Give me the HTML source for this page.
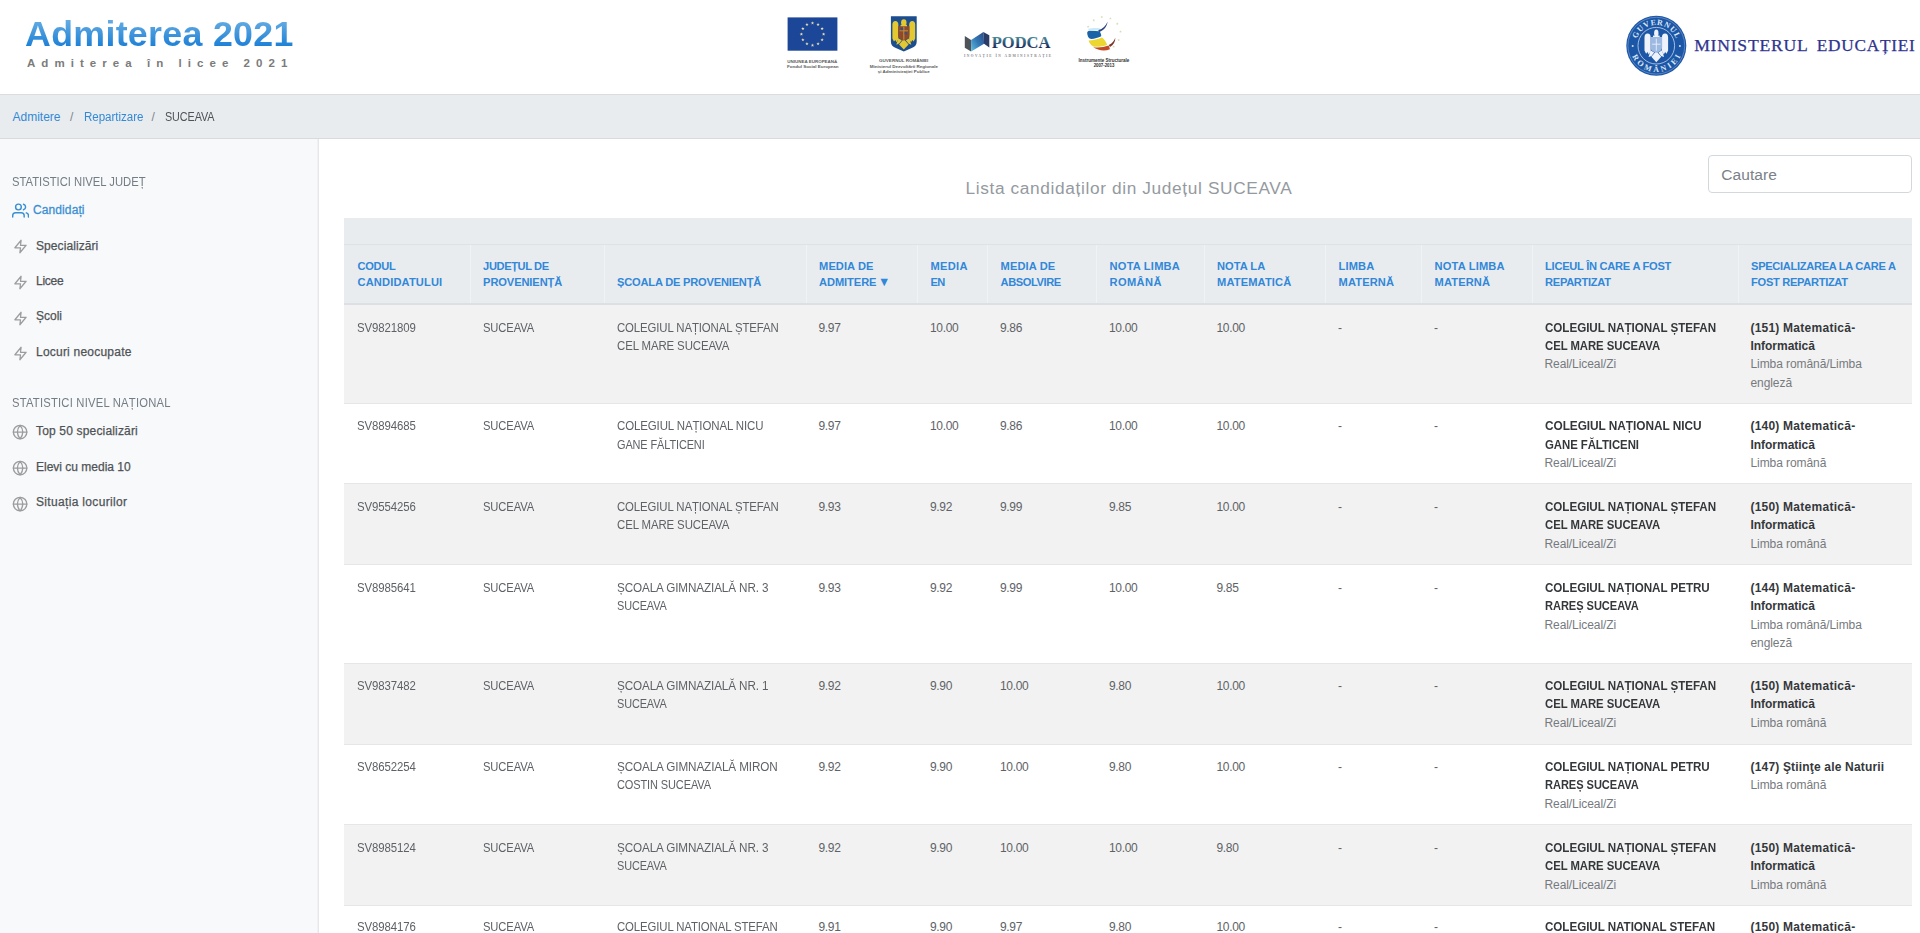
<!DOCTYPE html>
<html lang="ro">
<head>
<meta charset="utf-8">
<title>Admiterea 2021 - SUCEAVA</title>
<style>
*{box-sizing:border-box;margin:0;padding:0}
html,body{width:1920px;height:933px;overflow:hidden;background:#fff}
body{font-family:"Liberation Sans",sans-serif;font-size:12px;color:#5b5f63;position:relative}
a{text-decoration:none;color:#3289d6}
.abs{position:absolute;white-space:nowrap}

/* ---------- top header ---------- */
#top{position:absolute;left:0;top:0;width:1920px;height:94px;background:#fff}
#brand{left:24.5px;top:12px;font-weight:bold;font-size:34.6px;line-height:44px;letter-spacing:.3px;transform:scaleX(1.034);transform-origin:0 50%;
  background:linear-gradient(#63abe2 20%,#1b7fd6 80%);-webkit-background-clip:text;background-clip:text;color:transparent}
#brandsub{left:27px;top:55px;font-weight:bold;font-size:11.5px;line-height:16px;letter-spacing:6.05px;color:#7b7b7b}

/* ---------- breadcrumb ---------- */
#crumb{position:absolute;left:0;top:94px;width:1920px;height:45px;background:#e9ecef;border-top:1px solid #dcdcdc;border-bottom:1px solid #d9dadb}
#crumb span,#crumb a{position:absolute;top:13px;line-height:18px;font-size:12px;white-space:nowrap}
#crumb .sep{color:#7d858c}

/* ---------- sidebar ---------- */
#side{position:absolute;left:0;top:139px;width:319px;height:794px;background:#f8f9fa;border-right:1px solid #e6e7e9;box-shadow:inset -1px 0 0 rgba(0,0,0,.03)}
#side .h{position:absolute;left:11.9px;font-size:13px;line-height:18px;color:#747c84;letter-spacing:0;white-space:nowrap;transform:scaleX(.865);transform-origin:0 50%}
#side .it{position:absolute;left:36px;font-size:12px;line-height:18px;color:#4f5357;white-space:nowrap;-webkit-text-stroke:.25px #4f5357;letter-spacing:0}
#side .it.on{left:33px;color:#3a8fd3;-webkit-text-stroke:.28px #3a8fd3;letter-spacing:.1px}
#side svg{position:absolute;fill:none;stroke:#9a9da0;stroke-width:2;stroke-linecap:round;stroke-linejoin:round}
#side svg.on{stroke:#3a8fd3}

/* ---------- main ---------- */
#title{left:965.5px;top:176.3px;font-size:17.3px;line-height:24px;color:#949aa0;letter-spacing:.63px}
#search{position:absolute;left:1708px;top:155px;width:204px;height:38px;border:1px solid #d3d8dd;border-radius:4px;background:#fff}
#search span{position:absolute;left:12.2px;top:9px;font-size:15.5px;line-height:20px;color:#7a8188;letter-spacing:.1px}

#tbl{position:absolute;left:344px;top:218px;width:1568px}
#tbar{height:27px;background:#e9ecef;border-bottom:1px solid #dfe2e5}
.row{display:grid;grid-template-columns:125.5px 134px 202px 111.5px 70px 109px 107.5px 121.5px 96px 110.5px 206px 174.5px;width:1568px}
#thead{height:60px;background:#e9ecef;border-bottom:2px solid #dcdfe3;align-items:end}
#thead div{height:58px;display:flex;align-items:flex-end;padding:0 0 12.6px 12.6px;font-weight:bold;font-size:11.1px;line-height:16.3px;color:#3187d8;letter-spacing:0;border-left:1px solid #f0f2f4;white-space:nowrap}
#thead em{font-style:normal;font-size:12.5px;line-height:10px;letter-spacing:0;margin-left:-1.5px}
#thead div:first-child{border-left:0;padding-left:13.5px}
.r{border-top:1px solid #e4e6e9;overflow:hidden}
.r.f{border-top:0}
.r.o{background:#f2f2f2}
.r>div{padding:var(--p) 0 0 13px;line-height:18.4px;font-size:12px;white-space:nowrap;letter-spacing:-.5px;color:#5e6266}
.r b{color:#35383b;letter-spacing:-.28px;font-weight:bold}
.r i{font-style:normal;color:#767a7e;letter-spacing:-.08px}
.r .n{letter-spacing:-.35px}
.u{display:inline-block;transform-origin:0 50%;transform:scaleX(var(--k));letter-spacing:-.12px;vertical-align:top}
.r b .u{letter-spacing:-.05px}
.r b.m{letter-spacing:.18px}
</style>
</head>
<body>

<div id="top">
  <div id="brand" class="abs">Admiterea 2021</div>
  <div id="brandsub" class="abs">Admiterea în licee 2021</div>
<!--LOGOS-START-->
<svg id="logos" width="400" height="94" viewBox="760 0 400 94" style="position:absolute;left:760px;top:0">
<defs>
<linearGradient id="gpm" x1="0" y1="1" x2="1" y2="0"><stop offset="0" stop-color="#62c0e0"/><stop offset=".5" stop-color="#3277b4"/><stop offset="1" stop-color="#2c4a86"/></linearGradient>
<linearGradient id="gpt" x1="0" y1="0" x2="0" y2="1"><stop offset=".25" stop-color="#4b8b98"/><stop offset=".6" stop-color="#2b4c72"/><stop offset=".78" stop-color="#1c2a58"/></linearGradient>
<filter id="sb" x="-10%" y="-10%" width="120%" height="120%"><feGaussianBlur stdDeviation=".35"/></filter>
<filter id="sb2" x="-10%" y="-10%" width="120%" height="120%"><feGaussianBlur stdDeviation=".6"/></filter>
</defs>
<g filter="url(#sb)">
<rect x="787.6" y="17.4" width="49.8" height="33.3" fill="#1f4698"/>
<g fill="#e3e0b0"><polygon points="812.50,21.35 812.93,22.51 814.16,22.56 813.20,23.33 813.53,24.52 812.50,23.84 811.47,24.52 811.80,23.33 810.84,22.56 812.07,22.51"/><polygon points="818.05,22.84 818.48,23.99 819.71,24.05 818.75,24.81 819.08,26.00 818.05,25.32 817.02,26.00 817.35,24.81 816.39,24.05 817.62,23.99"/><polygon points="822.11,26.90 822.54,28.06 823.78,28.11 822.81,28.88 823.14,30.07 822.11,29.39 821.08,30.07 821.41,28.88 820.45,28.11 821.68,28.06"/><polygon points="823.60,32.45 824.03,33.61 825.26,33.66 824.30,34.43 824.63,35.62 823.60,34.94 822.57,35.62 822.90,34.43 821.94,33.66 823.17,33.61"/><polygon points="822.11,38.00 822.54,39.16 823.78,39.21 822.81,39.98 823.14,41.17 822.11,40.48 821.08,41.17 821.41,39.98 820.45,39.21 821.68,39.16"/><polygon points="818.05,42.06 818.48,43.22 819.71,43.27 818.75,44.04 819.08,45.23 818.05,44.55 817.02,45.23 817.35,44.04 816.39,43.27 817.62,43.22"/><polygon points="812.50,43.55 812.93,44.71 814.16,44.76 813.20,45.53 813.53,46.72 812.50,46.04 811.47,46.72 811.80,45.53 810.84,44.76 812.07,44.71"/><polygon points="806.95,42.06 807.38,43.22 808.61,43.27 807.65,44.04 807.98,45.23 806.95,44.55 805.92,45.23 806.25,44.04 805.29,43.27 806.52,43.22"/><polygon points="802.89,38.00 803.32,39.16 804.55,39.21 803.59,39.98 803.92,41.17 802.89,40.48 801.86,41.17 802.19,39.98 801.22,39.21 802.46,39.16"/><polygon points="801.40,32.45 801.83,33.61 803.06,33.66 802.10,34.43 802.43,35.62 801.40,34.94 800.37,35.62 800.70,34.43 799.74,33.66 800.97,33.61"/><polygon points="802.89,26.90 803.32,28.06 804.55,28.11 803.59,28.88 803.92,30.07 802.89,29.39 801.86,30.07 802.19,28.88 801.22,28.11 802.46,28.06"/><polygon points="806.95,22.84 807.38,23.99 808.61,24.05 807.65,24.81 807.98,26.00 806.95,25.32 805.92,26.00 806.25,24.81 805.29,24.05 806.52,23.99"/></g>
</g>
<g font-family="'Liberation Sans',sans-serif" font-weight="bold" font-size="3.9" fill="#5c5c5c" text-anchor="middle">
<text x="812.3" y="62.9" textLength="50" lengthAdjust="spacingAndGlyphs">UNIUNEA EUROPEANĂ</text>
<text x="812.8" y="68" textLength="51.5" lengthAdjust="spacingAndGlyphs">Fondul Social European</text>
<text x="903.7" y="62.4" textLength="49.3" lengthAdjust="spacingAndGlyphs">GUVERNUL ROMÂNIEI</text>
<text x="903.9" y="67.6" textLength="68.4" lengthAdjust="spacingAndGlyphs">Ministerul Dezvoltării Regionale</text>
<text x="903.7" y="72.7" textLength="52" lengthAdjust="spacingAndGlyphs">și Administrației Publice</text>
</g>
<!-- coat of arms -->
<g filter="url(#sb)">
<path d="M890.9 16.2h25.8v25.6c0 3.400-2 5.200-5 6.300l-7.900 3.400-7.900-3.400c-3-1.100-5-2.900-5-6.300z" fill="#1d4d8f"/>
<g fill="#e4c832"><path d="M892.40 24.48A2.98 3.72 0 0 1 898.35 24.48L898.35 39.17L896.57 42.18L895.26 39.97L893.95 41.57L892.40 38.56Z"/><path d="M915.20 24.48A2.98 3.72 0 0 0 909.25 24.48L909.25 39.17L911.03 42.18L912.34 39.97L913.65 41.57L915.20 38.56Z"/><ellipse cx="903.80" cy="22.61" rx="2.72" ry="3.41"/><rect x="900.57" y="24.82" width="6.46" height="3.01"/><path d="M898.25 38.36L896.33 44.68L899.16 43.58L901.78 40.37Z"/><path d="M909.35 38.36L911.27 44.68L908.44 43.58L905.82 40.37Z"/><path d="M903.80 38.97L908.54 44.38L903.80 49.40L899.06 44.38Z"/></g><path d="M898.15 26.22H909.45V35.12C909.45 39.07 905.82 40.17 903.80 40.57C901.78 40.17 898.15 39.07 898.15 35.12Z" fill="#8f4a2c"/>
<path d="M899.600 30.800h8.400M903.800 26.800v13" stroke="#c8a03c" stroke-width="1.100" fill="none" opacity=".8"/>
<path d="M900.600 27.800h2.600v2.400h-2.600z" fill="#2b4f96" opacity=".8"/><path d="M904.600 32h2.600v2.600h-2.600z" fill="#2b4f96" opacity=".7"/>
</g>
<!-- PODCA -->
<g filter="url(#sb)">
<path d="M964.800 36l6.300 3.900v11.700l-6.300-3.900z" fill="#4e5258"/>
<path d="M971.100 39.900l12.300-7.800.7 11.600-13 7.900z" fill="url(#gpm)"/>
<path d="M983.300 32.100l6 3.100v12.200l-5.300-3.700z" fill="#2c3b68"/>
</g>
<text x="991.700" y="48" font-family="'Liberation Serif',serif" font-weight="bold" font-size="17.400" fill="url(#gpt)" textLength="58.800" lengthAdjust="spacingAndGlyphs">PODCA</text>
<text x="964" y="56.800" font-family="'Liberation Serif',serif" font-weight="bold" font-size="3.500" fill="#85878b" textLength="87.200" lengthAdjust="spacing">INOVAȚIE ÎN ADMINISTRAȚIE</text>
<!-- Instrumente Structurale -->
<g filter="url(#sb2)">
<g fill="#dcd9b6"><polygon points="1093.75,18.85 1094.11,19.81 1095.13,19.85 1094.33,20.49 1094.60,21.47 1093.75,20.91 1092.90,21.47 1093.17,20.49 1092.37,19.85 1093.39,19.81"/><polygon points="1101.80,15.65 1102.16,16.61 1103.18,16.65 1102.38,17.29 1102.65,18.27 1101.80,17.71 1100.95,18.27 1101.22,17.29 1100.42,16.65 1101.44,16.61"/><polygon points="1110.40,16.95 1110.76,17.91 1111.78,17.95 1110.98,18.59 1111.25,19.57 1110.40,19.01 1109.55,19.57 1109.82,18.59 1109.02,17.95 1110.04,17.91"/><polygon points="1117.30,22.35 1117.66,23.31 1118.68,23.35 1117.88,23.99 1118.15,24.97 1117.30,24.41 1116.45,24.97 1116.72,23.99 1115.92,23.35 1116.94,23.31"/><polygon points="1120.50,30.15 1120.86,31.11 1121.88,31.15 1121.08,31.79 1121.35,32.77 1120.50,32.21 1119.65,32.77 1119.92,31.79 1119.12,31.15 1120.14,31.11"/><polygon points="1118.70,38.65 1119.06,39.61 1120.08,39.65 1119.28,40.29 1119.55,41.27 1118.70,40.71 1117.85,41.27 1118.12,40.29 1117.32,39.65 1118.34,39.61"/><polygon points="1113.60,45.15 1113.96,46.11 1114.98,46.15 1114.18,46.79 1114.45,47.77 1113.60,47.21 1112.75,47.77 1113.02,46.79 1112.22,46.15 1113.24,46.11"/><polygon points="1088.10,25.30 1088.46,26.26 1089.48,26.30 1088.68,26.94 1088.95,27.92 1088.10,27.36 1087.25,27.92 1087.52,26.94 1086.72,26.30 1087.74,26.26"/></g>
<path d="M1087.2 33C1087 31 1089 30.6 1091 30.7L1099.5 31.3C1100.8 33 1101.4 35 1101.2 36.3C1098 38 1093 39.2 1090 38.8C1088 37.5 1087.3 35 1087.2 33Z" fill="#1a62a6"/>
<path d="M1088.3 28.8c3.5-.9 8.6-1.200 11.600-.4l.6 1.900c-3.500.5-8.300.4-12 .3z" fill="#c4e8f4" opacity=".9"/>
<path d="M1088.6 40.5C1093 40.5 1098 39.2 1102 37.6C1104 39 1106 41.5 1107.2 44.800C1103 46.6 1097 47.2 1093.2 46.6C1090.8 45 1089.2 42.8 1088.6 40.5Z" fill="#ecd630"/>
<path d="M1093.2 47.3C1098 48 1104 47.4 1108.5 45.6C1109.2 46.8 1109.8 48 1109.9 49.2C1105 51.3 1098 50.6 1093.2 47.3Z" fill="#c24a25"/>
<path d="M1098.200 30.300c4.500-1.500 7.900-4.600 9.300-8.600-.4 4.600-3.500 8.500-8.200 10.300z" fill="#2a4580"/>
<path d="M1108.800 45c3.300-1.400 5.400-3.900 6.500-7.200.2 3.900-1.800 7.300-5.300 9.300z" fill="#7a3426"/>
</g>
<g font-family="'Liberation Sans',sans-serif" font-weight="bold" font-size="4.500" fill="#303030" text-anchor="middle">
<text x="1103.900" y="61.700" textLength="51" lengthAdjust="spacingAndGlyphs">Instrumente Structurale</text>
<text x="1104" y="67" textLength="20.700" lengthAdjust="spacingAndGlyphs">2007-2013</text>
</g>
</svg>
<!--LOGOS-END-->
<!--SEAL-START-->
<svg id="seal" width="320" height="94" viewBox="1600 0 320 94" style="position:absolute;left:1600px;top:0">
<defs>
<path id="arcT" d="M1635.50 45.70A20.8 20.8 0 0 1 1677.10 45.70"/>
<path id="arcB" d="M1629.90 45.70A26.4 26.4 0 0 0 1682.70 45.70"/>
<filter id="sb3" x="-10%" y="-10%" width="120%" height="120%"><feGaussianBlur stdDeviation=".3"/></filter>
</defs>
<g filter="url(#sb3)">
<circle cx="1656.3" cy="45.7" r="30" fill="#1f57a6"/>
<circle cx="1656.3" cy="45.7" r="28.400" fill="none" stroke="#7ea3d5" stroke-width=".6"/>
<circle cx="1656.3" cy="45.7" r="18.300" fill="none" stroke="#c4d5ee" stroke-width=".8"/>
<circle cx="1632.70" cy="46.10" r="1" fill="#cfe0f5"/><circle cx="1679.90" cy="46.10" r="1" fill="#cfe0f5"/>
<g fill="#eef3fb"><path d="M1644.50 37.46A3.08 3.85 0 0 1 1650.66 37.46L1650.66 51.12L1648.81 54.38L1647.46 51.99L1646.10 53.72L1644.50 50.46Z"/><path d="M1668.10 37.46A3.08 3.85 0 0 0 1661.94 37.46L1661.94 51.12L1663.79 54.38L1665.14 51.99L1666.50 53.72L1668.10 50.46Z"/><ellipse cx="1656.30" cy="33.19" rx="2.19" ry="3.69"/><rect x="1652.96" y="35.58" width="6.68" height="3.26"/><path d="M1650.56 50.25L1648.57 57.09L1651.50 55.90L1654.21 52.42Z"/><path d="M1662.04 50.25L1664.03 57.09L1661.10 55.90L1658.39 52.42Z"/><path d="M1656.30 50.90L1661.21 56.77L1656.30 62.20L1651.39 56.77Z"/></g><path d="M1650.45 37.10H1662.15V46.73C1662.15 51.01 1658.39 52.20 1656.30 52.64C1654.21 52.20 1650.45 51.01 1650.45 46.73Z" fill="#9db9e2"/>
<path d="M1652.10 44.20h8.400M1656.30 38.70v12" stroke="#f2f6fc" stroke-width=".8" fill="none"/>
</g>
<g font-family="'Liberation Serif',serif" font-size="8" fill="#dce7f6" text-anchor="middle" font-weight="bold">
<text><textPath href="#arcT" startOffset="50%" textLength="51" lengthAdjust="spacing">GUVERNUL</textPath></text>
<text><textPath href="#arcB" startOffset="50%" textLength="61" lengthAdjust="spacing">ROMÂNIEI</textPath></text>
</g>
<g font-family="'Liberation Serif',serif" font-size="16.4" fill="#2f3490" stroke="#2f3490" stroke-width=".25" letter-spacing=".7">
<text x="1694.2" y="51.4" textLength="114.3" lengthAdjust="spacingAndGlyphs">MINISTERUL</text>
<text x="1816.8" y="51.4" textLength="98.6" lengthAdjust="spacingAndGlyphs">EDUCAȚIEI</text>
</g>
</svg>
<!--SEAL-END-->
</div>

<div id="crumb">
  <a style="left:12.5px">Admitere</a><span class="sep" style="left:70px">/</span>
  <a style="left:83.5px;letter-spacing:-.05px;transform:scaleX(.965);transform-origin:0 50%">Repartizare</a><span class="sep" style="left:151.5px">/</span>
  <span style="left:164.5px;color:#4d5358;letter-spacing:-.1px;transform:scaleX(.9);transform-origin:0 50%">SUCEAVA</span>
</div>

<div id="side">
  <div class="h" style="top:33.5px">STATISTICI NIVEL JUDEȚ</div>
  <svg class="on" viewBox="0 0 24 24" style="left:11.5px;top:63.4px;width:17.2px;height:17.2px"><path d="M17 21v-2a4 4 0 0 0-4-4H5a4 4 0 0 0-4 4v2"/><circle cx="9" cy="7" r="4"/><path d="M23 21v-2a4 4 0 0 0-3-3.87"/><path d="M16 3.13a4 4 0 0 1 0 7.75"/></svg>
  <div class="it on" style="top:62px">Candidați</div>
  <svg viewBox="0 0 24 24" style="left:12.6px;top:100.4px;width:15px;height:15px"><polygon points="13 2 3 14 12 14 11 22 21 10 12 10 13 2"/></svg>
  <div class="it" style="top:98px;letter-spacing:.08px">Specializări</div>
  <svg viewBox="0 0 24 24" style="left:12.6px;top:135.9px;width:15px;height:15px"><polygon points="13 2 3 14 12 14 11 22 21 10 12 10 13 2"/></svg>
  <div class="it" style="top:133px;letter-spacing:-.25px">Licee</div>
  <svg viewBox="0 0 24 24" style="left:12.6px;top:171.6px;width:15px;height:15px"><polygon points="13 2 3 14 12 14 11 22 21 10 12 10 13 2"/></svg>
  <div class="it" style="top:168.3px">Școli</div>
  <svg viewBox="0 0 24 24" style="left:12.6px;top:207.4px;width:15px;height:15px"><polygon points="13 2 3 14 12 14 11 22 21 10 12 10 13 2"/></svg>
  <div class="it" style="top:204px;letter-spacing:.22px">Locuri neocupate</div>
  <div class="h" style="top:254.6px;letter-spacing:.24px">STATISTICI NIVEL NAȚIONAL</div>
  <svg viewBox="0 0 24 24" style="left:12.25px;top:285.1px;width:16.2px;height:16.2px"><circle cx="12" cy="12" r="10"/><line x1="2" y1="12" x2="22" y2="12"/><path d="M12 2a15.3 15.3 0 0 1 4 10 15.3 15.3 0 0 1-4 10 15.3 15.3 0 0 1-4-10 15.3 15.3 0 0 1 4-10z"/></svg>
  <div class="it" style="top:282.5px;letter-spacing:.17px">Top 50 specializări</div>
  <svg viewBox="0 0 24 24" style="left:12.25px;top:321px;width:16.2px;height:16.2px"><circle cx="12" cy="12" r="10"/><line x1="2" y1="12" x2="22" y2="12"/><path d="M12 2a15.3 15.3 0 0 1 4 10 15.3 15.3 0 0 1-4 10 15.3 15.3 0 0 1-4-10 15.3 15.3 0 0 1 4-10z"/></svg>
  <div class="it" style="top:319px">Elevi cu media 10</div>
  <svg viewBox="0 0 24 24" style="left:12.25px;top:356.7px;width:16.2px;height:16.2px"><circle cx="12" cy="12" r="10"/><line x1="2" y1="12" x2="22" y2="12"/><path d="M12 2a15.3 15.3 0 0 1 4 10 15.3 15.3 0 0 1-4 10 15.3 15.3 0 0 1-4-10 15.3 15.3 0 0 1 4-10z"/></svg>
  <div class="it" style="top:354.4px;letter-spacing:.33px">Situația locurilor</div>
</div>

<div id="title" class="abs">Lista candidaților din Județul SUCEAVA</div>
<div id="search"><span>Cautare</span></div>

<div id="tbl">
  <div id="tbar"></div>
  <div id="thead" class="row">
    <div><p><span style="letter-spacing:-0.29px">CODUL</span><br><span style="letter-spacing:0.15px">CANDIDATULUI</span></p></div>
    <div><p><span style="letter-spacing:-0.38px">JUDEȚUL DE</span><br><span style="letter-spacing:-0.1px">PROVENIENȚĂ</span></p></div>
    <div><p><span style="letter-spacing:-0.2px">ȘCOALA DE PROVENIENȚĂ</span></p></div>
    <div><p><span style="letter-spacing:0.07px">MEDIA DE</span><br><span style="letter-spacing:-0.08px">ADMITERE <em>▼</em></span></p></div>
    <div><p><span style="letter-spacing:0.29px">MEDIA</span><br><span style="letter-spacing:-0.62px">EN</span></p></div>
    <div><p><span style="letter-spacing:0.11px">MEDIA DE</span><br><span style="letter-spacing:-0.41px">ABSOLVIRE</span></p></div>
    <div><p><span style="letter-spacing:0.2px">NOTA LIMBA</span><br><span style="letter-spacing:0.38px">ROMÂNĂ</span></p></div>
    <div><p><span style="letter-spacing:0.0px">NOTA LA</span><br><span style="letter-spacing:0.13px">MATEMATICĂ</span></p></div>
    <div><p><span style="letter-spacing:0.12px">LIMBA</span><br><span style="letter-spacing:0.13px">MATERNĂ</span></p></div>
    <div><p><span style="letter-spacing:0.17px">NOTA LIMBA</span><br><span style="letter-spacing:0.13px">MATERNĂ</span></p></div>
    <div><p><span style="letter-spacing:-0.26px">LICEUL ÎN CARE A FOST</span><br><span style="letter-spacing:-0.31px">REPARTIZAT</span></p></div>
    <div><p><span style="letter-spacing:-0.31px">SPECIALIZAREA LA CARE A</span><br><span style="letter-spacing:-0.31px">FOST REPARTIZAT</span></p></div>
  </div>
  <div class="row r o f" style="height:98px;--p:13.5px">
    <div><span class="u" style="--k:0.951">SV9821809</span></div><div><span class="u" style="--k:0.934">SUCEAVA</span></div><div><span class="u" style="--k:0.949">COLEGIUL NAȚIONAL ȘTEFAN</span><br><span class="u" style="--k:0.952">CEL MARE SUCEAVA</span></div>
    <div class="n">9.97</div><div class="n">10.00</div><div class="n">9.86</div><div class="n">10.00</div><div class="n">10.00</div><div>-</div><div>-</div>
    <div><b><span class="u" style="--k:0.970">COLEGIUL NAȚIONAL ȘTEFAN</span><br><span class="u" style="--k:0.945">CEL MARE SUCEAVA</span></b><br><i>Real/Liceal/Zi</i></div>
    <div><b class="m">(151) <span style="letter-spacing:.3px">Matematică-</span><br><span style="letter-spacing:-.03px">Informatică</span></b><br><i>Limba română/Limba<br>engleză</i></div>
  </div>
  <div class="row r" style="height:80px;--p:13.4px">
    <div><span class="u" style="--k:0.951">SV8894685</span></div><div><span class="u" style="--k:0.934">SUCEAVA</span></div><div><span class="u" style="--k:0.956">COLEGIUL NAȚIONAL NICU</span><br><span class="u" style="--k:0.911">GANE FĂLTICENI</span></div>
    <div class="n">9.97</div><div class="n">10.00</div><div class="n">9.86</div><div class="n">10.00</div><div class="n">10.00</div><div>-</div><div>-</div>
    <div><b><span class="u" style="--k:0.987">COLEGIUL NAȚIONAL NICU</span><br><span class="u" style="--k:0.948">GANE FĂLTICENI</span></b><br><i>Real/Liceal/Zi</i></div>
    <div><b class="m">(140) <span style="letter-spacing:.3px">Matematică-</span><br><span style="letter-spacing:-.03px">Informatică</span></b><br><i>Limba română</i></div>
  </div>
  <div class="row r o" style="height:81px;--p:14.0px">
    <div><span class="u" style="--k:0.951">SV9554256</span></div><div><span class="u" style="--k:0.934">SUCEAVA</span></div><div><span class="u" style="--k:0.949">COLEGIUL NAȚIONAL ȘTEFAN</span><br><span class="u" style="--k:0.952">CEL MARE SUCEAVA</span></div>
    <div class="n">9.93</div><div class="n">9.92</div><div class="n">9.99</div><div class="n">9.85</div><div class="n">10.00</div><div>-</div><div>-</div>
    <div><b><span class="u" style="--k:0.970">COLEGIUL NAȚIONAL ȘTEFAN</span><br><span class="u" style="--k:0.945">CEL MARE SUCEAVA</span></b><br><i>Real/Liceal/Zi</i></div>
    <div><b class="m">(150) <span style="letter-spacing:.3px">Matematică-</span><br><span style="letter-spacing:-.03px">Informatică</span></b><br><i>Limba română</i></div>
  </div>
  <div class="row r" style="height:99px;--p:13.7px">
    <div><span class="u" style="--k:0.951">SV8985641</span></div><div><span class="u" style="--k:0.934">SUCEAVA</span></div><div><span class="u" style="--k:0.975">ȘCOALA GIMNAZIALĂ NR. 3</span><br><span class="u" style="--k:0.909">SUCEAVA</span></div>
    <div class="n">9.93</div><div class="n">9.92</div><div class="n">9.99</div><div class="n">10.00</div><div class="n">9.85</div><div>-</div><div>-</div>
    <div><b><span class="u" style="--k:0.970">COLEGIUL NAȚIONAL PETRU</span><br><span class="u" style="--k:0.923">RAREȘ SUCEAVA</span></b><br><i>Real/Liceal/Zi</i></div>
    <div><b class="m">(144) <span style="letter-spacing:.3px">Matematică-</span><br><span style="letter-spacing:-.03px">Informatică</span></b><br><i>Limba română/Limba<br>engleză</i></div>
  </div>
  <div class="row r o" style="height:81px;--p:13.0px">
    <div><span class="u" style="--k:0.951">SV9837482</span></div><div><span class="u" style="--k:0.934">SUCEAVA</span></div><div><span class="u" style="--k:0.975">ȘCOALA GIMNAZIALĂ NR. 1</span><br><span class="u" style="--k:0.909">SUCEAVA</span></div>
    <div class="n">9.92</div><div class="n">9.90</div><div class="n">10.00</div><div class="n">9.80</div><div class="n">10.00</div><div>-</div><div>-</div>
    <div><b><span class="u" style="--k:0.970">COLEGIUL NAȚIONAL ȘTEFAN</span><br><span class="u" style="--k:0.945">CEL MARE SUCEAVA</span></b><br><i>Real/Liceal/Zi</i></div>
    <div><b class="m">(150) <span style="letter-spacing:.3px">Matematică-</span><br><span style="letter-spacing:-.03px">Informatică</span></b><br><i>Limba română</i></div>
  </div>
  <div class="row r" style="height:80px;--p:12.8px">
    <div><span class="u" style="--k:0.951">SV8652254</span></div><div><span class="u" style="--k:0.934">SUCEAVA</span></div><div><span class="u" style="--k:0.976">ȘCOALA GIMNAZIALĂ MIRON</span><br><span class="u" style="--k:0.916">COSTIN SUCEAVA</span></div>
    <div class="n">9.92</div><div class="n">9.90</div><div class="n">10.00</div><div class="n">9.80</div><div class="n">10.00</div><div>-</div><div>-</div>
    <div><b><span class="u" style="--k:0.970">COLEGIUL NAȚIONAL PETRU</span><br><span class="u" style="--k:0.923">RAREȘ SUCEAVA</span></b><br><i>Real/Liceal/Zi</i></div>
    <div><b class="m">(147) Ştiinţe ale Naturii</b><br><i>Limba română</i></div>
  </div>
  <div class="row r o" style="height:81px;--p:13.7px">
    <div><span class="u" style="--k:0.951">SV8985124</span></div><div><span class="u" style="--k:0.934">SUCEAVA</span></div><div><span class="u" style="--k:0.975">ȘCOALA GIMNAZIALĂ NR. 3</span><br><span class="u" style="--k:0.909">SUCEAVA</span></div>
    <div class="n">9.92</div><div class="n">9.90</div><div class="n">10.00</div><div class="n">10.00</div><div class="n">9.80</div><div>-</div><div>-</div>
    <div><b><span class="u" style="--k:0.970">COLEGIUL NAȚIONAL ȘTEFAN</span><br><span class="u" style="--k:0.945">CEL MARE SUCEAVA</span></b><br><i>Real/Liceal/Zi</i></div>
    <div><b class="m">(150) <span style="letter-spacing:.3px">Matematică-</span><br><span style="letter-spacing:-.03px">Informatică</span></b><br><i>Limba română</i></div>
  </div>
  <div class="row r" style="height:81px;--p:12.4px">
    <div><span class="u" style="--k:0.951">SV8984176</span></div><div><span class="u" style="--k:0.934">SUCEAVA</span></div><div><span class="u" style="--k:0.948">COLEGIUL NATIONAL STEFAN</span><br><span class="u" style="--k:0.952">CEL MARE SUCEAVA</span></div>
    <div class="n">9.91</div><div class="n">9.90</div><div class="n">9.97</div><div class="n">9.80</div><div class="n">10.00</div><div>-</div><div>-</div>
    <div><b><span class="u" style="--k:0.970">COLEGIUL NATIONAL STEFAN</span><br><span class="u" style="--k:0.945">CEL MARE SUCEAVA</span></b><br><i>Real/Liceal/Zi</i></div>
    <div><b class="m">(150) <span style="letter-spacing:.3px">Matematică-</span><br><span style="letter-spacing:-.03px">Informatică</span></b><br><i>Limba română</i></div>
  </div>
</div>

</body>
</html>
